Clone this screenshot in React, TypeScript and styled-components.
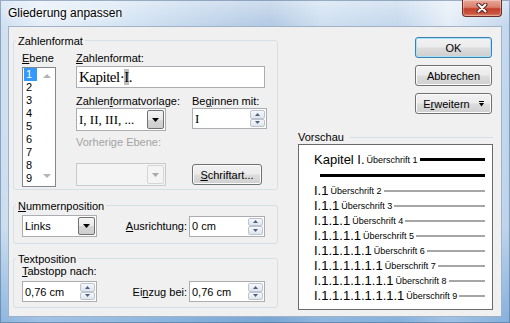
import styled, { createGlobalStyle } from 'styled-components';

const GlobalStyle = createGlobalStyle`
  html, body {
    margin: 0;
    padding: 0;
  }

  body {
    width: 510px;
    height: 323px;
    overflow: hidden;
    font-family: 'Liberation Sans', Arial, sans-serif;
    font-size: 11px;
    color: #000;
  }
`;

const LEVELS = ['1', '2', '3', '4', '5', '6', '7', '8', '9'];

const PREVIEW_ROWS = [2, 3, 4, 5, 6, 7, 8, 9].map((level) => ({
  number: 'I' + '.1'.repeat(level - 1),
  title: `Überschrift ${level}`,
}));

const CloseIcon = () => (
  <svg width="12" height="10" viewBox="0 0 12 10">
    <path d="M2.5 1.5 L9.5 8.5 M9.5 1.5 L2.5 8.5" stroke="#5b2520" strokeWidth="4" strokeLinecap="round" />
    <path d="M2.5 1.5 L9.5 8.5 M9.5 1.5 L2.5 8.5" stroke="#fff" strokeWidth="2" strokeLinecap="round" />
  </svg>
);

const DropArrow = ({ color = '#000' }: { color?: string }) => (
  <svg width="7" height="4" viewBox="0 0 7 4">
    <path d="M0 0 H7 L3.5 4 Z" fill={color} />
  </svg>
);

const SmallArrow = ({ up, color }: { up?: boolean; color: string }) => (
  <svg width="5" height="3" viewBox="0 0 5 3">
    <path d={up ? 'M0 3 H5 L2.5 0 Z' : 'M0 0 H5 L2.5 3 Z'} fill={color} />
  </svg>
);

const ExpandIcon = () => (
  <svg width="5" height="6" viewBox="0 0 5 6">
    <rect x="0" y="0" width="5" height="1" fill="#000" />
    <path d="M0 2 H5 L2.5 5.5 Z" fill="#000" />
  </svg>
);

const Spin = ({ width, value, serif }: { width: number; value: string; serif?: boolean }) => (
  <SpinBox $width={width}>
    <SpinValue $serif={serif}>{value}</SpinValue>
    <SpinButtons>
      <SpinHalf>
        <SmallArrow up color="#4c5f80" />
      </SpinHalf>
      <SpinHalf>
        <SmallArrow color="#4c5f80" />
      </SpinHalf>
    </SpinButtons>
  </SpinBox>
);

const Combo = ({
  width,
  height,
  value,
  serif,
  disabled,
}: {
  width: number;
  height: number;
  value?: string;
  serif?: boolean;
  disabled?: boolean;
}) => (
  <ComboBox $width={width} $height={height} $disabled={disabled}>
    <ComboValue $serif={serif}>{value}</ComboValue>
    <ComboButton $disabled={disabled}>
      <DropArrow color={disabled ? '#a8a8a8' : '#000'} />
    </ComboButton>
  </ComboBox>
);

const App = () => {
  return (
    <>
      <GlobalStyle />
      <Window>
        <TitleBar>
          <Title>Gliederung anpassen</Title>
          <CloseButton>
            <CloseIcon />
          </CloseButton>
        </TitleBar>
        <Client>
          <LeftColumn>
            <Group $height={157}>
              <GroupLegend>Zahlenformat</GroupLegend>
              <FormatBody>
                <LevelColumn>
                  <FieldLabel>
                    <Key>E</Key>bene
                  </FieldLabel>
                  <ListBox>
                    <ListItems>
                      {LEVELS.map((level) => (
                        <ListItem key={level} $selected={level === '1'}>
                          {level}
                        </ListItem>
                      ))}
                    </ListItems>
                    <ScrollBar>
                      <DropArrowUp />
                      <DropArrowDown />
                    </ScrollBar>
                  </ListBox>
                </LevelColumn>
                <FormatColumn>
                  <FieldLabel>
                    <Key>Z</Key>ahlenformat:
                  </FieldLabel>
                  <TextField>
                    Kapitel·<FieldShade>I</FieldShade>.
                  </TextField>
                  <FieldRow>
                    <FieldColumn $width={90}>
                      <FieldLabel>
                        Zahlen<Key>f</Key>ormatvorlage:
                      </FieldLabel>
                      <Combo width={90} height={23} value="I, II, III, ..." serif />
                    </FieldColumn>
                    <FieldColumn $width={75}>
                      <FieldLabel>
                        Be<Key>g</Key>innen mit:
                      </FieldLabel>
                      <Spin width={75} value="I" serif />
                    </FieldColumn>
                  </FieldRow>
                  <FieldLabel $disabled $gap={4}>
                    Vorherige Ebene:
                  </FieldLabel>
                  <BottomRow>
                    <Combo width={90} height={23} disabled />
                    <PushButton $width={70} $offset={1}>
                      <span>
                        <Key>S</Key>chriftart...
                      </span>
                    </PushButton>
                  </BottomRow>
                </FormatColumn>
              </FormatBody>
            </Group>

            <Group $height={46} $gap={8}>
              <GroupLegend>
                <Key>N</Key>ummernposition
              </GroupLegend>
              <InlineRow $top={3}>
                <Combo width={75} height={22} value="Links" />
                <LabeledSpin>
                  <FieldLabel>
                    <Key>A</Key>usrichtung:
                  </FieldLabel>
                  <Spin width={76} value="0 cm" />
                </LabeledSpin>
              </InlineRow>
            </Group>

            <Group $height={57} $gap={7}>
              <GroupLegend>Textposition</GroupLegend>
              <TextPositionBody>
                <FieldLabel $compact>
                  <Key>T</Key>abstopp nach:
                </FieldLabel>
                <InlineRow $top={3} $flush>
                  <Spin width={75} value="0,76 cm" />
                  <LabeledSpin>
                    <FieldLabel>
                      Ei<Key>n</Key>zug bei:
                    </FieldLabel>
                    <Spin width={76} value="0,76 cm" />
                  </LabeledSpin>
                </InlineRow>
              </TextPositionBody>
            </Group>
          </LeftColumn>

          <RightColumn>
            <ButtonStack>
              <PushButton $default>OK</PushButton>
              <PushButton>Abbrechen</PushButton>
              <PushButton>
                <span>
                  E<Key>r</Key>weitern
                </span>
                <ExpandIcon />
              </PushButton>
            </ButtonStack>
            <PreviewHeader>
              <span>Vorschau</span>
              <EtchedRule />
            </PreviewHeader>
            <PreviewBox>
              <PreviewRow>
                <RowNumber>Kapitel I.</RowNumber>
                <RowTitle>Überschrift 1</RowTitle>
                <RowRule $major />
              </PreviewRow>
              <FullRule />
              {PREVIEW_ROWS.map((row) => (
                <PreviewRow key={row.title}>
                  <RowNumber>{row.number}</RowNumber>
                  <RowTitle>{row.title}</RowTitle>
                  <RowRule />
                </PreviewRow>
              ))}
            </PreviewBox>
          </RightColumn>
        </Client>
      </Window>
    </>
  );
};

export default App;

const Window = styled.div`
  position: relative;
  width: 510px;
  height: 323px;
  display: flex;
  flex-direction: column;
  box-sizing: border-box;
  background:
    linear-gradient(
      180deg,
      rgba(255, 255, 255, 0.45) 0px,
      rgba(255, 255, 255, 0.1) 26px,
      rgba(255, 255, 255, 0) 70%,
      rgba(30, 110, 190, 0.35) 100%
    ),
    linear-gradient(
      90deg,
      #c9dcef 0%,
      #e2ecf7 8%,
      #d3e3f3 22%,
      #b8cfe8 40%,
      #a9c3e0 53%,
      #c8dbee 63%,
      #bcd2ea 78%,
      #e1ebf6 88%,
      #bcd2ea 100%
    );
  box-shadow: inset 0 0 0 1px rgba(60, 90, 130, 0.45);
`;

const TitleBar = styled.div`
  flex: none;
  height: 26px;
  display: flex;
  align-items: flex-start;
  justify-content: space-between;
  padding: 0 8px;
`;

const Title = styled.span`
  margin-top: 6px;
  font-size: 12px;
  line-height: 15px;
  color: #000;
  text-shadow: 0 0 6px #fff, 0 0 3px #fff;
`;

const CloseButton = styled.div`
  box-sizing: border-box;
  width: 40px;
  height: 17px;
  display: flex;
  align-items: center;
  justify-content: center;
  border: 1px solid #6b2c26;
  border-top: none;
  border-radius: 0 0 4px 4px;
  background: linear-gradient(180deg, #e9a89a 0%, #d9806e 45%, #c2402b 55%, #cc5640 85%, #e0886c 100%);
  box-shadow: inset 0 0 0 1px rgba(255, 255, 255, 0.3);
`;

const Client = styled.div`
  flex: none;
  height: 291px;
  box-sizing: border-box;
  margin: 0 8px;
  display: flex;
  padding: 6px 0 0 4px;
  border: 1px solid #9fb2c7;
  background: #f0f0f0;
`;

const LeftColumn = styled.div`
  flex: none;
  width: 265px;
  display: flex;
  flex-direction: column;
`;

const Group = styled.fieldset<{ $height: number; $gap?: number }>`
  box-sizing: border-box;
  height: ${({ $height }) => $height}px;
  min-width: 0;
  margin: ${({ $gap }) => $gap ?? 0}px 0 0 0;
  padding: 0;
  border: 1px solid #d5dfe5;
  border-radius: 3px;
`;

const GroupLegend = styled.legend`
  margin-left: 2px;
  padding: 2px 2px 0 2px;
  font-size: 11px;
  line-height: 12px;
`;

const Key = styled.span`
  text-decoration: underline;
  text-underline-offset: 1px;
`;

const FieldLabel = styled.label<{ $disabled?: boolean; $gap?: number; $compact?: boolean }>`
  display: block;
  margin-top: ${({ $gap }) => $gap ?? 0}px;
  line-height: ${({ $compact }) => ($compact ? 13 : 14)}px;
  white-space: nowrap;
  color: ${({ $disabled }) => ($disabled ? '#a3a3a3' : '#000')};
`;

const FormatBody = styled.div`
  display: flex;
  gap: 20px;
  padding: 4px 0 0 8px;
`;

const LevelColumn = styled.div`
  width: 34px;
  display: flex;
  flex-direction: column;
`;

const ListBox = styled.div`
  box-sizing: border-box;
  width: 34px;
  height: 120px;
  margin-top: 2px;
  display: flex;
  border: 1px solid #828790;
  background: #fff;
`;

const ListItems = styled.div`
  flex: 1;
  padding: 0 1px;
`;

const ListItem = styled.div<{ $selected?: boolean }>`
  height: 13px;
  padding-left: 2px;
  line-height: 13px;
  color: ${({ $selected }) => ($selected ? '#fff' : '#000')};
  background: ${({ $selected }) => ($selected ? '#3399ff' : 'transparent')};
`;

const ScrollBar = styled.div`
  width: 17px;
  display: flex;
  flex-direction: column;
  align-items: center;
  justify-content: space-between;
  padding: 6px 0 8px 0;
`;

const DropArrowUp = styled.span`
  width: 0;
  height: 0;
  border-left: 4px solid transparent;
  border-right: 4px solid transparent;
  border-bottom: 4px solid #b4b4b4;
`;

const DropArrowDown = styled.span`
  width: 0;
  height: 0;
  border-left: 4px solid transparent;
  border-right: 4px solid transparent;
  border-top: 4px solid #b4b4b4;
`;

const FormatColumn = styled.div`
  display: flex;
  flex-direction: column;
`;

const TextField = styled.div`
  box-sizing: border-box;
  width: 189px;
  height: 22px;
  margin-top: 1px;
  padding-left: 2px;
  border: 1px solid #abadb3;
  background: #fff;
  font-family: 'Liberation Serif', 'Times New Roman', serif;
  font-size: 15px;
  line-height: 20px;
  letter-spacing: -0.5px;
  white-space: nowrap;
`;

const FieldShade = styled.span`
  background: #c0c0c0;
`;

const FieldRow = styled.div`
  display: flex;
  gap: 26px;
  margin-top: 6px;
`;

const FieldColumn = styled.div<{ $width: number }>`
  width: ${({ $width }) => $width}px;
  display: flex;
  flex-direction: column;
`;

const BottomRow = styled.div`
  display: flex;
  align-items: flex-start;
  gap: 26px;
  margin-top: 14px;
`;

const ComboBox = styled.div<{ $width: number; $height: number; $disabled?: boolean }>`
  box-sizing: border-box;
  width: ${({ $width }) => $width}px;
  height: ${({ $height }) => $height}px;
  display: flex;
  padding: 1px;
  border: 1px solid ${({ $disabled }) => ($disabled ? '#c9c9c9' : '#abadb3')};
  background: ${({ $disabled }) => ($disabled ? '#f4f4f4' : '#fff')};
`;

const ComboValue = styled.span<{ $serif?: boolean }>`
  flex: 1;
  display: flex;
  align-items: center;
  padding-left: 1px;
  white-space: nowrap;
  overflow: hidden;
  font-family: ${({ $serif }) =>
    $serif ? "'Liberation Serif', 'Times New Roman', serif" : "'Liberation Sans', Arial, sans-serif"};
  font-size: ${({ $serif }) => ($serif ? 13 : 11)}px;
`;

const ComboButton = styled.span<{ $disabled?: boolean }>`
  box-sizing: border-box;
  width: 17px;
  display: flex;
  align-items: center;
  justify-content: center;
  border: 1px solid ${({ $disabled }) => ($disabled ? '#d6d6d6' : '#707070')};
  border-radius: 2px;
  background: ${({ $disabled }) =>
    $disabled ? '#f4f4f4' : 'linear-gradient(180deg, #f4f4f4 0%, #e9e9e9 50%, #d6d6d6 51%, #cdcdcd 100%)'};
`;

const SpinBox = styled.div<{ $width: number }>`
  box-sizing: border-box;
  width: ${({ $width }) => $width}px;
  height: 21px;
  display: flex;
  border: 1px solid #abadb3;
  background: #fff;
`;

const SpinValue = styled.span<{ $serif?: boolean }>`
  flex: 1;
  display: flex;
  align-items: center;
  padding-left: 2px;
  white-space: nowrap;
  font-family: ${({ $serif }) =>
    $serif ? "'Liberation Serif', 'Times New Roman', serif" : "'Liberation Sans', Arial, sans-serif"};
  font-size: ${({ $serif }) => ($serif ? 13 : 11)}px;
`;

const SpinButtons = styled.div`
  width: 15px;
  display: flex;
  flex-direction: column;
  padding: 1px;
`;

const SpinHalf = styled.span`
  flex: 1;
  display: flex;
  align-items: center;
  justify-content: center;
  border: 1px solid #bcc4cf;
  border-radius: 2px;
  background: linear-gradient(180deg, #f6f8fa 0%, #dfe5ec 100%);
`;

const InlineRow = styled.div<{ $top: number; $flush?: boolean }>`
  display: flex;
  align-items: center;
  margin-top: ${({ $top }) => $top}px;
  padding: ${({ $flush }) => ($flush ? '0' : '0 12px 0 8px')};
`;

const LabeledSpin = styled.div`
  margin-left: auto;
  display: flex;
  align-items: center;
  gap: 2px;
`;

const TextPositionBody = styled.div`
  padding: 0 12px 0 8px;
`;

const RightColumn = styled.div`
  flex: 1;
  display: flex;
  flex-direction: column;
  padding: 4px 8px 0 20px;
`;

const ButtonStack = styled.div`
  align-self: flex-end;
  margin-right: 1px;
  display: flex;
  flex-direction: column;
  gap: 7px;
`;

const PushButton = styled.button<{ $default?: boolean; $width?: number; $offset?: number }>`
  box-sizing: border-box;
  width: ${({ $width }) => $width ?? 77}px;
  height: 21px;
  margin-top: ${({ $offset }) => $offset ?? 0}px;
  padding: 0;
  display: flex;
  align-items: center;
  justify-content: center;
  gap: 9px;
  font-family: 'Liberation Sans', Arial, sans-serif;
  font-size: 11px;
  color: #000;
  border: 1px solid ${({ $default }) => ($default ? '#3c7fb1' : '#707070')};
  border-radius: 3px;
  background: linear-gradient(180deg, #f2f2f2 0%, #ebebeb 48%, #dddddd 52%, #cfcfcf 100%);
  box-shadow: inset 0 0 0 1px ${({ $default }) => ($default ? '#a6e2f8' : '#fbfbfb')};
`;

const PreviewHeader = styled.div`
  display: flex;
  align-items: center;
  margin-top: 17px;
  height: 13px;
  line-height: 13px;
`;

const EtchedRule = styled.span`
  flex: 1;
  height: 1px;
  margin-left: 6px;
  background: #d5dfe5;
`;

const PreviewBox = styled.div`
  box-sizing: border-box;
  height: 166px;
  padding: 7px 7px 0 15px;
  border: 1px solid #6a6a6a;
  background: #fff;
`;

const PreviewRow = styled.div`
  display: flex;
  align-items: center;
  height: 15px;
`;

const RowNumber = styled.span`
  font-size: 13px;
  line-height: 15px;
  white-space: nowrap;
`;

const RowTitle = styled.span`
  margin-left: 2px;
  font-size: 9px;
  white-space: nowrap;
`;

const RowRule = styled.span<{ $major?: boolean }>`
  flex: 1;
  height: ${({ $major }) => ($major ? 3 : 2)}px;
  margin-left: 2px;
  background: ${({ $major }) => ($major ? '#000' : '#a6a6a6')};
`;

const FullRule = styled.div`
  height: 3px;
  margin: 7px 0 6px 6px;
  background: #000;
`;
